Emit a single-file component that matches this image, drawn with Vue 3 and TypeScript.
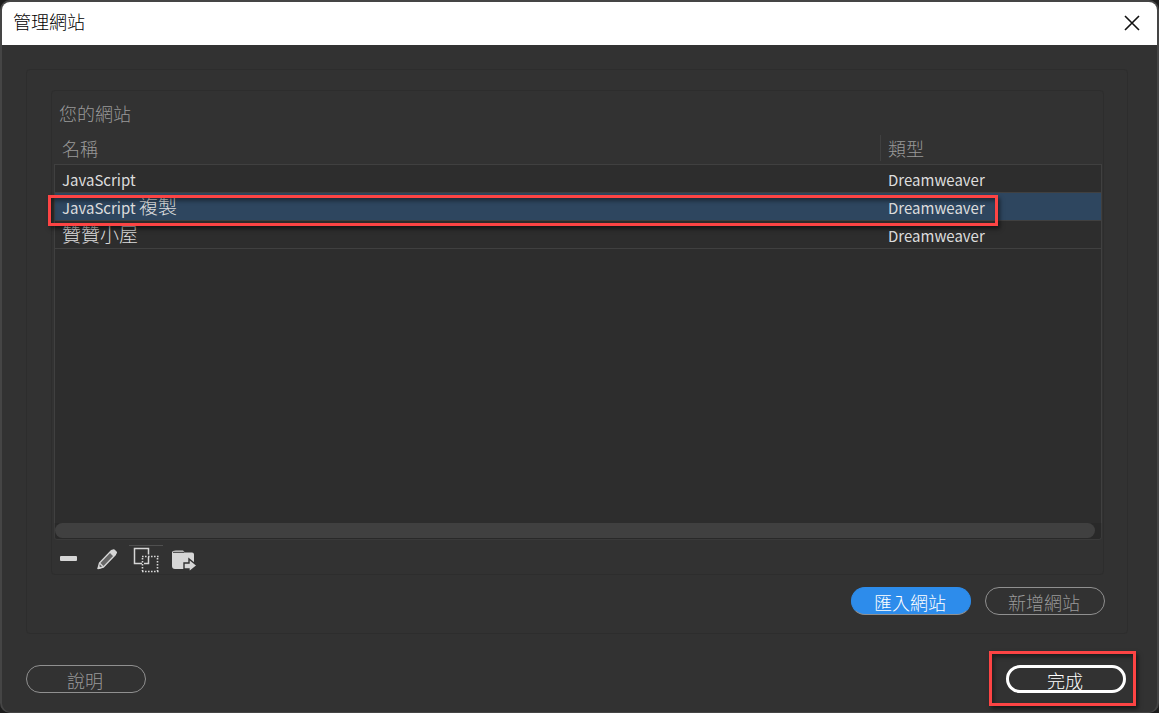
<script setup lang="ts">
import { ref } from 'vue'

interface Site {
  latin: string
  han: string
  type: string
}

const sites: Site[] = [
  { latin: 'JavaScript', han: '', type: 'Dreamweaver' },
  { latin: 'JavaScript ', han: '複製', type: 'Dreamweaver' },
  { latin: '', han: '贊贊小屋', type: 'Dreamweaver' },
]
const selected = ref(1)
</script>

<template>
  <div class="desktop">
    <main class="dialog" role="dialog" aria-labelledby="dialog-title">
      <header class="titlebar">
        <h1 id="dialog-title">管理網站</h1>
        <button class="close" type="button" aria-label="關閉">
          <svg width="16" height="16" viewBox="0 0 16 16">
            <path d="M1 1L15 15M15 1L1 15" fill="none" stroke="#111" stroke-width="1.6" />
          </svg>
        </button>
      </header>

      <div class="content">
        <section class="panel">
          <div class="group">
            <h2>您的網站</h2>
            <div class="list">
              <table>
                <thead>
                  <tr>
                    <th scope="col">名稱</th>
                    <th class="type" scope="col"><span>類型</span></th>
                  </tr>
                </thead>
                <tbody>
                  <tr
                    v-for="(site, i) in sites"
                    :key="i"
                    :class="{ selected: selected === i }"
                    @click="selected = i"
                  >
                    <td>{{ site.latin }}<span class="han">{{ site.han }}</span></td>
                    <td class="type">{{ site.type }}<i v-if="i === 1" class="mark row-mark"></i></td>
                  </tr>
                </tbody>
              </table>
              <div class="empty"></div>
              <div class="track"><div class="thumb"></div></div>
            </div>
            <div class="tools">
              <button type="button" aria-label="刪除">
                <svg width="26" height="28" viewBox="0 0 26 28">
                  <rect x="3" y="10" width="17" height="5" rx="1" fill="#d6d6d6" />
                </svg>
              </button>
              <button type="button" aria-label="編輯">
                <svg width="26" height="28" viewBox="0 0 26 28">
                  <path d="M5 22.500L6.500 17L18.500 4.500L22.500 8.500L10.500 21Z" fill="#666" stroke="#d6d6d6" stroke-width="1.300" stroke-linejoin="round" />
                  <path d="M16.500 6.500L19.500 3.500Q20.500 2.800 21.500 3.500L23.800 5.800Q24.500 6.800 23.500 7.800L20.700 10.700Z" fill="#d6d6d6" />
                  <path d="M6.500 17L10.500 21" stroke="#d6d6d6" stroke-width="1.200" />
                  <path d="M4.500 23L5.600 19.500L8.300 22.200Z" fill="#d6d6d6" />
                </svg>
              </button>
              <button class="active" type="button" aria-label="複製">
                <svg width="34" height="28" viewBox="0 0 34 28">
                  <path d="M13 17.500H5.500V2.500H19.500V8.500M19.500 11V17.500H15" fill="none" stroke="#d6d6d6" stroke-width="1.500" />
                  <path d="M13 10.500H30M13 25.500H30M13.500 12V25M28.500 12V25" fill="none" stroke="#d6d6d6" stroke-width="1.600" stroke-dasharray="1.600 1.400" />
                </svg>
              </button>
              <button type="button" aria-label="匯出">
                <svg width="28" height="28" viewBox="0 0 28 28">
                  <path d="M3 4.500H10L12 6.500H19Q21 6.500 21 8.500V23H2Q-1 23 -1 20V6.500Q-1 4.500 3 4.500Z" fill="#d6d6d6" />
                  <path d="M0 6.300H11.500" stroke="#323232" stroke-width="1" />
                  <path d="M11 17H16V13L24 19.500L16 26V23H11Z" fill="#d6d6d6" stroke="#323232" stroke-width="1.400" />
                </svg>
              </button>
            </div>
          </div>
          <div class="actions">
            <button class="pill primary" type="button">匯入網站</button>
            <button class="pill" type="button">新增網站</button>
          </div>
        </section>

        <footer>
          <button class="pill" type="button">說明</button>
          <div class="done-wrap">
            <button class="pill done" type="button">完成</button>
            <i class="mark done-mark"></i>
          </div>
        </footer>
      </div>
    </main>
  </div>
</template>

<style>
html,
body {
  margin: 0;
  background: #1c1c1c;
}
</style>

<style scoped>
* {
  box-sizing: border-box;
}
.desktop {
  min-height: 100vh;
  display: flex;
  background: #1c1c1c;
  font-family: "Noto Sans CJK TC", sans-serif;
  font-weight: 300;
}
.dialog {
  flex: 1;
  display: flex;
  flex-direction: column;
  overflow: hidden;
  border: 2px solid #454545;
  border-bottom-width: 1px;
  border-radius: 10px;
  background: #323232;
}
.titlebar {
  height: 43px;
  display: flex;
  align-items: center;
  justify-content: space-between;
  padding: 0 17px 4px 11px;
  background: #fff;
}
h1,
h2 {
  margin: 0;
  font-weight: 300;
}
h1 {
  padding-bottom: 2px;
  color: #000;
  font-size: 18px;
  line-height: 22px;
}
button {
  margin: 0;
  padding: 0;
  border: 0;
  background: none;
  font-family: inherit;
}
.close {
  height: 16px;
  margin-top: 2px;
}
svg {
  display: block;
  overflow: visible;
}
.content {
  flex: 1;
  display: flex;
  flex-direction: column;
  padding: 24px 29px 19px 24px;
}
.panel {
  flex: 1;
  display: flex;
  flex-direction: column;
  padding: 20px 22px 18px 24px;
  border: 1px solid #2d2d2d;
  border-radius: 4px;
}
.group {
  flex: 1;
  display: flex;
  flex-direction: column;
  margin-right: 1px;
  padding: 8px 1px 0 2px;
  border: 1px solid #2d2d2d;
  border-radius: 4px;
}
h2 {
  padding-left: 5px;
  color: #999;
  font-size: 18px;
  line-height: 28px;
}
.list {
  flex: 1;
  display: flex;
  flex-direction: column;
  margin-top: 8px;
}
table {
  width: 100%;
  table-layout: fixed;
  border-collapse: separate;
  border-spacing: 0;
}
th {
  height: 29px;
  padding: 0 0 3px 8px;
  text-align: left;
  color: #999;
  font-size: 18px;
  font-weight: 300;
  line-height: 26px;
}
th.type {
  padding-left: 0;
}
th.type span {
  display: block;
  padding-left: 7px;
  border-left: 1px solid #404040;
}
.type {
  width: 222px;
}
tbody tr {
  position: relative;
  background: #2d2d2d;
}
tbody tr.selected {
  z-index: 1;
  background: #2e465f;
}
td {
  height: 28px;
  padding: 3px 0 0 8px;
  border-top: 1px solid #404040;
  color: #ddd;
  font-size: 15px;
  font-weight: 400;
  line-height: 24px;
  white-space: pre;
}
td:first-child {
  padding-left: 7px;
  border-left: 1px solid #404040;
}
td:last-child {
  border-right: 1px solid #404040;
}
.han {
  font-size: 19px;
  font-weight: 300;
  line-height: 20px;
}
.empty {
  flex: 1;
  border: 1px solid #404040;
  border-bottom: 0;
  background: #2d2d2d;
}
.track {
  height: 17px;
  padding-right: 6px;
  border: 1px solid #3a3a3a;
  border-top: 0;
  border-radius: 0 0 3px 3px;
  background: #292929;
}
.thumb {
  height: 15px;
  border-radius: 8px;
  background: #404040;
}
.tools {
  display: flex;
  gap: 10px;
  padding: 5px 0 0 3px;
}
.tools button {
  border-top: 1px solid transparent;
}
.tools .active {
  border-color: #505050;
}
.actions {
  display: flex;
  justify-content: flex-end;
  gap: 14px;
  padding-top: 12px;
}
.pill {
  width: 120px;
  height: 28px;
  padding: 1px 2px 0 0;
  border: 1px solid #909090;
  border-radius: 14px;
  color: #999;
  font-size: 18px;
  font-weight: 300;
  line-height: 24px;
}
.primary {
  border-color: #2d8ceb #2d8ceb #909090;
  background: #2d8ceb;
  color: #fff;
}
footer {
  display: flex;
  justify-content: space-between;
  padding-top: 31px;
}
.done-wrap {
  position: relative;
  margin-right: 2px;
}
.done {
  display: block;
  border: 3px solid #fff;
  color: #fff;
  line-height: 20px;
}
.mark {
  position: absolute;
  border: 3px solid #fd4444;
  box-shadow: 2px 3px 4px rgba(0, 0, 0, 0.5), inset 2px 3px 4px rgba(0, 0, 0, 0.4);
  pointer-events: none;
}
.row-mark {
  top: 3px;
  bottom: -6px;
  left: -6px;
  right: 104px;
}
.done-mark {
  inset: -14px -10px -13px -17px;
}
</style>
